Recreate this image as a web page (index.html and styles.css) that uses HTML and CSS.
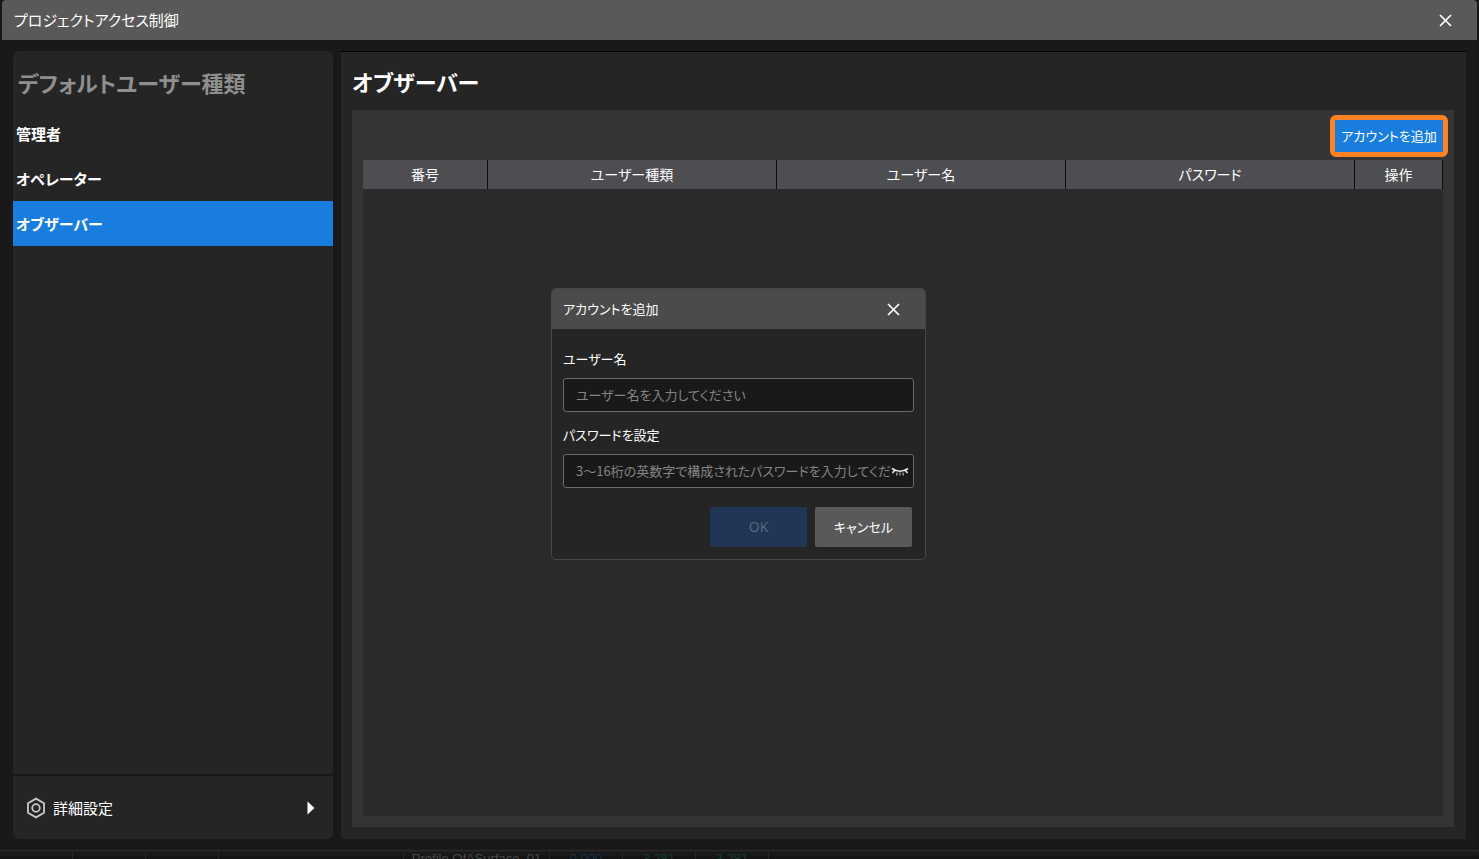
FILE: index.html
```html
<!DOCTYPE html>
<html lang="ja">
<head>
<meta charset="utf-8">
<title>プロジェクトアクセス制御</title>
<link rel="stylesheet" href="styles.css">
</head>
<body>
<div class="window">
  <header class="titlebar">
    <h1 class="titlebar-text">プロジェクトアクセス制御</h1>
    <button class="close" type="button" aria-label="閉じる">
      <svg width="13" height="13" viewBox="0 0 13 13"><path d="M1 1L12 12M12 1L1 12"/></svg>
    </button>
  </header>
  <div class="content">
    <aside class="sidebar">
      <nav class="types">
        <h2 class="types-title">デフォルトユーザー種類</h2>
        <button class="type" type="button">管理者</button>
        <button class="type" type="button">オペレーター</button>
        <button class="type type-active" type="button">オブザーバー</button>
      </nav>
      <button class="advanced" type="button">
        <svg class="advanced-icon" width="20" height="22" viewBox="0 0 20 22"><path d="M10 1.6L18 6.3V15.7L10 20.4L2 15.7V6.3Z"/><circle cx="10" cy="11" r="3.8"/></svg>
        <span class="advanced-label">詳細設定</span>
        <svg class="advanced-arrow" width="8" height="14" viewBox="0 0 8 14"><path d="M0.500 0.500L7.500 7L0.500 13.500Z"/></svg>
      </button>
    </aside>
    <main class="main">
      <h2 class="main-title">オブザーバー</h2>
      <section class="panel">
        <div class="toolbar">
          <button class="add" type="button">アカウントを追加</button>
        </div>
        <div class="table-area">
          <table class="accounts">
            <colgroup><col class="col-no"><col><col><col><col class="col-action"></colgroup>
            <thead>
              <tr><th>番号</th><th>ユーザー種類</th><th>ユーザー名</th><th>パスワード</th><th>操作</th></tr>
            </thead>
          </table>
        </div>
      </section>
    </main>
  </div>
  <div class="overlay">
    <form class="dialog" role="dialog" aria-labelledby="dialog-title">
      <header class="dialog-header">
        <h2 class="dialog-title" id="dialog-title">アカウントを追加</h2>
        <button class="close" type="button" aria-label="閉じる">
          <svg width="13" height="13" viewBox="0 0 13 13"><path d="M1 1L12 12M12 1L1 12"/></svg>
        </button>
      </header>
      <div class="dialog-body">
        <label class="label" for="user">ユーザー名</label>
        <input class="input" id="user" type="text" placeholder="ユーザー名を入力してください">
        <label class="label" for="password">パスワードを設定</label>
        <div class="password">
          <input class="input" id="password" type="password" placeholder="3～16桁の英数字で構成されたパスワードを入力してください">
          <button class="reveal" type="button" aria-label="パスワードを表示">
            <svg width="18" height="10" viewBox="0 0 18 10"><path d="M1 1.500Q9 7 17 1.500M3.500 3.500L1.500 6M14.500 3.500L16.500 6"/><path class="reveal-lash" d="M6.200 5.500L5.500 8.500M9 5.500V8.500M11.800 5.500L12.500 8.500"/></svg>
          </button>
        </div>
        <div class="actions">
          <button class="action action-ok" type="submit" disabled>OK</button>
          <button class="action" type="button">キャンセル</button>
        </div>
      </div>
    </form>
  </div>
</div>
<div class="backdrop">
  <span></span><span></span><span></span><span class="backdrop-wide"></span>
  <span class="backdrop-name">Profile OfASurface_01</span>
  <span class="backdrop-blue">0.000</span>
  <span class="backdrop-green">3.281</span>
  <span class="backdrop-green">3.281</span>
</div>
</body>
</html>
```

FILE: styles.css
```css
* { box-sizing: border-box; }

body {
  margin: 0;
  height: 100vh;
  display: flex;
  flex-direction: column;
  overflow: hidden;
  background: #171717;
  color: #fff;
  font-family: "Noto Sans CJK JP", sans-serif;
  font-size: 15px;
  line-height: 20px;
  font-feature-settings: "palt";
}

h1, h2 { margin: 0; }

button, input {
  margin: 0;
  border: 0;
  padding: 0;
  background: none;
  color: inherit;
  font: inherit;
  font-feature-settings: inherit;
}

.window {
  position: relative;
  flex: 1;
  min-height: 0;
  display: flex;
  flex-direction: column;
  margin: 0 2px;
  background: #191919;
}

.titlebar {
  height: 40px;
  flex: none;
  display: flex;
  align-items: center;
  justify-content: space-between;
  padding: 0 22px 0 12px;
  background: #595959;
  border-radius: 4px 4px 0 0;
}

.titlebar-text { font-size: 15px; font-weight: 400; }

.close {
  width: 20px;
  height: 20px;
  display: grid;
  place-items: center;
}

.close path { fill: none; stroke: #fff; stroke-width: 1.7; }

.content {
  flex: 1;
  min-height: 0;
  display: flex;
  gap: 8px;
  padding: 11px;
}

.sidebar {
  width: 320px;
  flex: none;
  display: flex;
  flex-direction: column;
  gap: 2px;
}

.types {
  flex: 1;
  display: flex;
  flex-direction: column;
  background: #252525;
  border-radius: 6px 6px 0 0;
}

.types-title {
  padding: 17px 5px 15px;
  color: #8f8f8f;
  font-size: 22px;
  line-height: 28px;
}

.type {
  height: 45px;
  padding: 0 3px;
  font-size: 15px;
  font-weight: 700;
  text-align: left;
}

.type-active { background: #197ddd; }

.advanced {
  height: 63px;
  display: flex;
  align-items: center;
  gap: 7px;
  padding: 0 18px 0 13px;
  background: #252525;
  border-radius: 0 0 6px 6px;
  text-align: left;
}

.advanced-label { flex: 1; }
.advanced-icon { fill: none; stroke: #c8c8c8; stroke-width: 1.8; }
.advanced-arrow { fill: #fff; }

.main {
  flex: 1;
  min-width: 0;
  display: flex;
  flex-direction: column;
  padding: 0 12px 12px 11px;
  background: #252525;
  border-top: 1px solid #000;
}

.main-title { padding: 15px 0; font-size: 22px; line-height: 28px; }

.panel {
  flex: 1;
  display: flex;
  flex-direction: column;
  padding: 0 11px 11px;
  background: #353535;
}

.toolbar {
  height: 50px;
  display: flex;
  justify-content: flex-end;
  padding: 10px 0 8px;
}

.add {
  width: 108px;
  background: #197ddd;
  outline: 5px solid #ff8126;
  border-radius: 1px;
  font-size: 13px;
  white-space: nowrap;
}

.table-area { flex: 1; background: #2a2a2a; }

.accounts { width: 100%; table-layout: fixed; border-collapse: separate; border-spacing: 0; }
.col-no { width: 125px; }
.col-action { width: 88px; }

.accounts th {
  height: 29px;
  padding: 0 0 1px;
  background: #4d4d52;
  border-right: 1px solid #0c0c0c;
  font-size: 14px;
  font-weight: 400;
}

.overlay {
  position: absolute;
  inset: 0;
  display: grid;
  place-items: center;
  padding: 0 2px 2px 0;
}

.dialog {
  width: 375px;
  background: #252525;
  border: 1px solid #464646;
  border-radius: 5px;
  overflow: hidden;
  font-size: 13px;
}

.dialog-header {
  height: 40px;
  display: flex;
  align-items: center;
  justify-content: space-between;
  padding: 0 22px 0 11px;
  background: #4b4b4b;
}

.dialog-title { font-size: 13px; font-weight: 400; }

.dialog-body { padding: 20px 11px 12px; }

.label { display: block; padding-bottom: 9px; }

.input {
  display: block;
  width: 100%;
  height: 34px;
  padding: 0 12px 2px;
  background: #191919;
  border: 1px solid #6a6a6a;
  border-radius: 3px;
}

.input::placeholder { color: #858585; opacity: 1; }
#user { margin-bottom: 13px; }

.password { position: relative; }
.password .input { padding-right: 20px; }

.reveal {
  position: absolute;
  top: 13px;
  right: 5px;
  width: 18px;
  height: 10px;
}

.reveal svg { display: block; }
.reveal path { fill: none; stroke: #e8e8e8; stroke-width: 1.6; }
.reveal .reveal-lash { stroke: #aaa; stroke-width: 1.2; }

.actions {
  display: flex;
  justify-content: flex-end;
  gap: 8px;
  padding: 19px 2px 0 0;
}

.action {
  width: 97px;
  height: 40px;
  background: #595959;
  border-radius: 2px;
}

.action-ok {
  background: #203654;
  color: #5a6b82;
  font-family: "Open Sans", sans-serif;
  font-size: 14px;
}

.backdrop {
  height: 9px;
  flex: none;
  display: flex;
  overflow: hidden;
  border-top: 1px solid #2b2b2b;
  background: linear-gradient(#1d1d1d, #121212);
  font-family: "Liberation Sans", sans-serif;
  font-size: 13px;
  line-height: 16px;
}

.backdrop span { width: 73px; flex: none; border-right: 1px solid #262626; text-align: center; }
.backdrop .backdrop-wide { width: 185px; }
.backdrop .backdrop-name { width: 146px; color: #494949; white-space: nowrap; }
.backdrop .backdrop-blue { color: #17304b; }
.backdrop .backdrop-green { color: #193b31; }
```
